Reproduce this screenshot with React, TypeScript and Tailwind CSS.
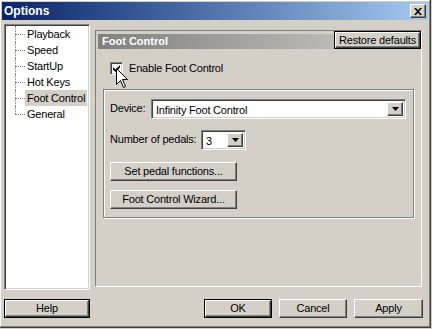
import React from "react";

const raised =
  "border border-t-white border-l-white border-r-[#404040] border-b-[#404040] shadow-[inset_-1px_-1px_0_#808080]";
const sunken =
  "border border-t-[#808080] border-l-[#808080] border-r-white border-b-white shadow-[inset_1px_1px_0_#404040,inset_-1px_-1px_0_#d4d0c8]";

function WinButton({
  children,
  def,
  className,
}: {
  children: React.ReactNode;
  def?: boolean;
  className: string;
}) {
  if (def) {
    return (
      <div className={`border border-black bg-[#d4d0c8] ${className}`}>
        <div className={`flex h-full w-full items-center justify-center whitespace-nowrap ${raised}`}>{children}</div>
      </div>
    );
  }
  return (
    <div className={`flex items-center justify-center whitespace-nowrap bg-[#d4d0c8] ${raised} ${className}`}>
      {children}
    </div>
  );
}

function Arrow() {
  return (
    <svg width="7" height="4" viewBox="0 0 7 4">
      <path d="M0 0h7L3.5 4z" fill="black" />
    </svg>
  );
}

function Combo({ value, className }: { value: string; className: string }) {
  return (
    <div className={`flex bg-white p-[2px] ${sunken} ${className}`}>
      <div className="flex-1 pl-[2px] leading-[16px]">{value}</div>
      <div className={`flex w-[16px] items-center justify-center bg-[#d4d0c8] ${raised}`}>
        <Arrow />
      </div>
    </div>
  );
}

const items = ["Playback", "Speed", "StartUp", "Hot Keys", "Foot Control", "General"];

function Tree() {
  return (
    <div className={`h-[266px] w-[86px] bg-white pl-[1px] pt-[1px] ${sunken}`}>
      {items.map((it, i) => (
        <div key={it} className="flex h-[16px] items-stretch pl-[9px]">
          <div className="flex w-[10px] shrink-0 flex-col">
            <div className="h-[8px] border-l border-dotted border-[#808080]" />
            <div
              className={`h-[8px] border-t border-dotted border-[#808080] ${
                i < items.length - 1 ? "border-l" : ""
              }`}
            />
          </div>
          <div className="flex items-center whitespace-nowrap">
            <span
              className={`px-[2px] leading-[16px] ${i === 4 ? "bg-[#d4d0c8]" : ""}`}
            >
              {it}
            </span>
          </div>
        </div>
      ))}
    </div>
  );
}

function Cursor() {
  return (
    <svg
      className="absolute left-[116px] top-[68px]"
      width="13"
      height="21"
      viewBox="0 0 13 21"
    >
      <path
        d="M0.5 0.5V16.5L4.5 12.5L7.5 19.5L9.5 18.5L6.5 11.5H11.5Z"
        fill="white"
        stroke="black"
        strokeWidth="1"
      />
    </svg>
  );
}

export default function App() {
  return (
    <div className="relative h-[329px] w-[432px] overflow-hidden bg-[#d4d0c8] font-['Liberation_Sans',Arial,sans-serif] text-[11px] tracking-[-0.2px] text-black">
      <div className="h-[328px] w-[431px] border-r border-b border-[#404040]">
        <div className="h-full w-full border border-t-white border-l-white border-r-[#808080] border-b-[#808080] p-[1px]">
          {/* title bar */}
          <div className="flex h-[18px] items-center bg-linear-to-r from-[#0a246a] to-[#a6caf0] pl-[2px] pr-[2px]">
            <span className="flex-1 text-[12px] font-bold tracking-normal text-white">Options</span>
            <WinButton className="h-[14px] w-[16px]">
              <svg width="8" height="7" viewBox="0 0 8 7">
                <path d="M0 0h2l2 2.3L6 0h2L5 3.5L8 7H6L4 4.7L2 7H0L3 3.5z" fill="black" />
              </svg>
            </WinButton>
          </div>

          <div className="pl-[2px] pr-[5px]">
            <div className="mt-[4px] flex items-start">
              <Tree />

              {/* page panel */}
              <div className="relative ml-[5px] mt-[6px] h-[257px] w-[327px] border border-t-[#808080] border-l-[#808080] border-r-white border-b-white px-[2px] pt-[3px]">
                <div className="flex h-[15px] items-center bg-linear-to-r from-[#808080] to-[#d4d0c8] pl-[4px]">
                  <span className="font-bold tracking-normal text-white">Foot Control</span>
                </div>
                <WinButton def className="absolute right-0 top-0 h-[18px] w-[87px]">
                  Restore defaults
                </WinButton>

                <div className="ml-[12px] mt-[11px] flex items-center">
                  <div className={`flex h-[13px] w-[13px] items-center justify-center bg-white ${sunken}`}>
                    <svg width="7" height="7" viewBox="0 0 7 7">
                      <path d="M0 2L2.5 4.5L7 0V2.5L2.5 7L0 4.5z" fill="black" />
                    </svg>
                  </div>
                  <span className="ml-[6px]">Enable Foot Control</span>
                </div>

                <div className="ml-[5px] mt-[12px] w-[311px] border border-[#808080] pb-[8px] pl-[6px] pr-[7px] pt-[9px] shadow-[inset_1px_1px_0_white,1px_1px_0_white]">
                  <div className="flex items-center">
                    <span className="w-[41px]">Device:</span>
                    <Combo value="Infinity Foot Control" className="h-[20px] flex-1" />
                  </div>
                  <div className="mt-[11px] flex items-center">
                    <span className="w-[91px]">Number of pedals:</span>
                    <Combo value="3" className="h-[20px] w-[45px]" />
                  </div>
                  <WinButton className="mt-[12px] h-[19px] w-[127px]">Set pedal functions...</WinButton>
                  <WinButton className="mt-[9px] h-[19px] w-[127px]">Foot Control Wizard...</WinButton>
                </div>
              </div>
            </div>

            {/* footer */}
            <div className="mt-[9px] flex">
              <WinButton def className="h-[19px] w-[86px]">Help</WinButton>
              <div className="ml-auto flex gap-[7px]">
                <WinButton def className="h-[19px] w-[68px]">OK</WinButton>
                <WinButton className="h-[19px] w-[68px]">Cancel</WinButton>
                <WinButton className="h-[19px] w-[69px]">Apply</WinButton>
              </div>
            </div>
          </div>
        </div>
      </div>
      <Cursor />
    </div>
  );
}
